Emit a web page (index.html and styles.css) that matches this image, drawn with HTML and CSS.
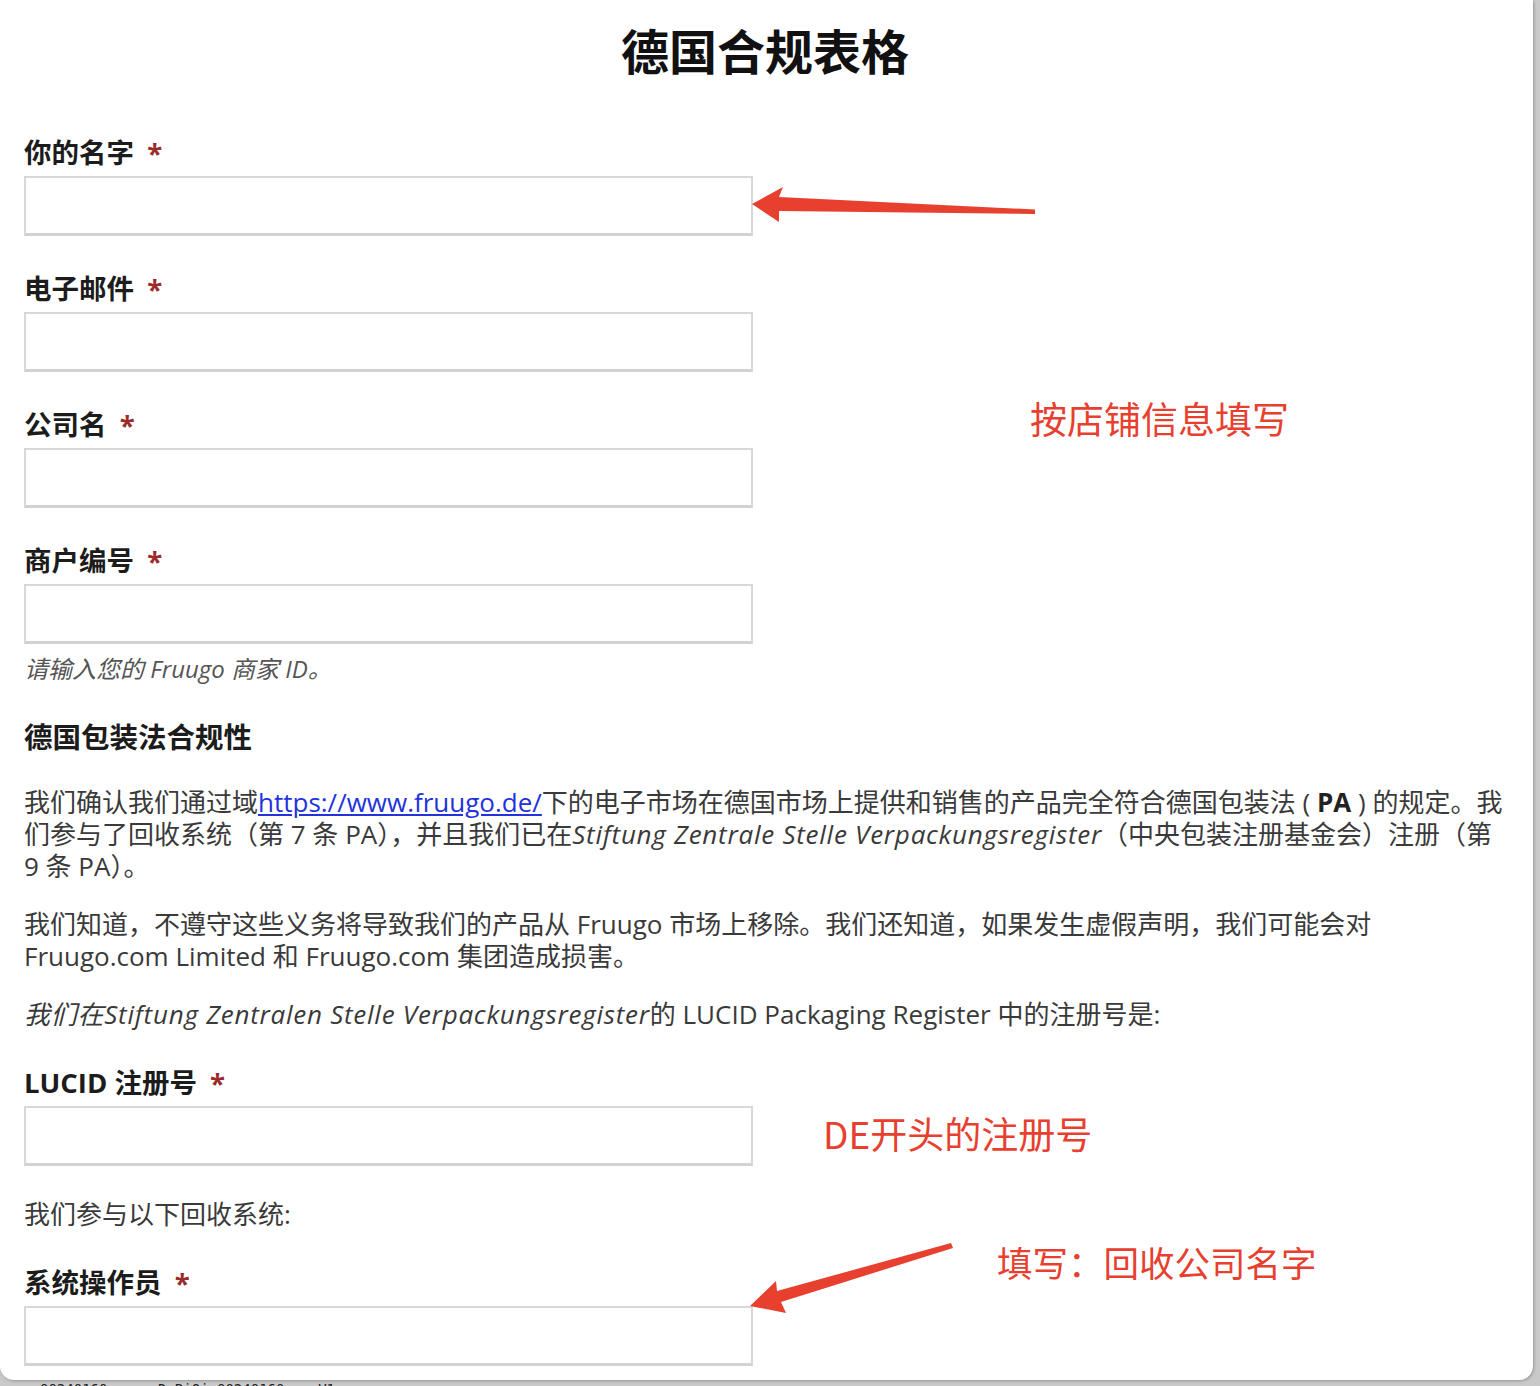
FILE: index.html
```html
<!DOCTYPE html>
<html lang="zh-CN">
<head>
    <meta charset="UTF-8">
    <meta name="viewport" content="width=device-width, initial-scale=1.0">
    <title>德国合规表格</title>
    <link rel="stylesheet" href="styles.css">
</head>
<body>
    <div class="window">
        <form class="form">
            <h1>德国合规表格</h1>

            <div class="field">
                <label>你的名字 <span class="req">*</span></label>
                <input type="text" class="text-input">
            </div>
            <div class="field">
                <label>电子邮件 <span class="req">*</span></label>
                <input type="text" class="text-input">
            </div>
            <div class="field">
                <label>公司名 <span class="req">*</span></label>
                <input type="text" class="text-input">
            </div>
            <div class="field">
                <label>商户编号 <span class="req">*</span></label>
                <input type="text" class="text-input">
                <p class="help">请输入您的 Fruugo 商家 ID。</p>
            </div>

            <h2>德国包装法合规性</h2>
            <p class="para">我们确认我们通过域<a href="#">https://www.fruugo.de/</a>下的电子市场在德国市场上提供和销售的产品完全符合德国包装法 ( <b>PA</b> ) 的规定。我们参与了回收系统（第 7 条 PA），并且我们已在<i>Stiftung Zentrale Stelle Verpackungsregister</i>（中央包装注册基金会）注册（第 9 条 PA）。</p>
            <p class="para">我们知道，不遵守这些义务将导致我们的产品从 Fruugo 市场上移除。我们还知道，如果发生虚假声明，我们可能会对 Fruugo.com Limited 和 Fruugo.com 集团造成损害。</p>
            <p class="para last"><i>我们在Stiftung Zentralen Stelle Verpackungsregister</i>的 LUCID Packaging Register 中的注册号是:</p>

            <div class="field short">
                <label>LUCID 注册号 <span class="req">*</span></label>
                <input type="text" class="text-input">
            </div>
            <p class="para last">我们参与以下回收系统:</p>
            <div class="field tight">
                <label>系统操作员 <span class="req">*</span></label>
                <input type="text" class="text-input">
            </div>
        </form>

        <!-- 标注 -->
        <div class="mark mark-shop">按店铺信息填写</div>
        <div class="mark mark-lucid">DE开头的注册号</div>
        <div class="mark mark-recycle">填写：回收公司名字</div>
        <svg class="arrows" width="1533" height="1380" viewBox="0 0 1533 1380">
            <polygon points="752,204 783,187 779,197 1035,209.5 1035,214 779,211 779,222" fill="#e8402f"/>
            <polygon points="750,1306 776,1281 777,1291 951,1243 953,1248 781,1302 786,1313" fill="#e8402f"/>
        </svg>
    </div>
    <div class="peek">00240160 &nbsp;&nbsp;&nbsp;&nbsp; D-BiOi 00240160 &nbsp;&nbsp; V1</div>
</body>
</html>
```

FILE: styles.css
```css
body {
    margin: 0;
    background-color: #c9c9c9;
    font-family: "Open Sans", "Noto Sans CJK SC", sans-serif;
    overflow: hidden;
}
.window {
    position: relative;
    width: 1533px;
    height: 1380px;
    background-color: #fff;
    border-radius: 0 0 14px 14px;
    box-shadow: 1px 1px 3px rgba(0,0,0,0.25);
    overflow: hidden;
}
.form {
    padding: 24px 27px 0 24px;
    color: #333;
}
h1 {
    margin: 0 0 57px;
    text-align: center;
    font-size: 48px;
    line-height: 56px;
    font-weight: bold;
    color: #111;
}
.field {
    margin-bottom: 37px;
}
.field.short {
    margin-bottom: 32px;
}
.field.tight {
    margin-bottom: 0;
}
.field label {
    display: block;
    font-size: 27.5px;
    line-height: 32px;
    font-weight: bold;
    color: #1c1c1c;
    margin-bottom: 7px;
}
.req {
    color: #9b2b2b;
    margin-left: 6px;
}
.text-input {
    display: block;
    box-sizing: border-box;
    width: 729px;
    height: 60px;
    margin: 0;
    border: 2px solid #d8d8d8;
    border-bottom-width: 3px;
    border-bottom-color: #d2d2d2;
    background: #fff;
}
.help {
    margin: 10px 0 0;
    font-size: 24px;
    line-height: 30px;
    font-style: italic;
    color: #555;
}
h2 {
    margin: 0 0 33px;
    font-size: 28.5px;
    line-height: 32px;
    font-weight: bold;
    color: #1c1c1c;
}
.para {
    margin: 0 0 26px;
    font-size: 26px;
    line-height: 32px;
    color: #3a3a3a;
}
.para i {
    letter-spacing: 0.75px;
}
.para.last {
    margin-bottom: 37px;
}
.para a {
    color: #2233dd;
}
.para b {
    color: #222;
}
.mark {
    position: absolute;
    font-family: "Noto Sans CJK SC", sans-serif;
    font-size: 37px;
    line-height: 40px;
    color: #e8402f;
    white-space: nowrap;
}
.mark-shop {
    left: 1030px;
    top: 398px;
}
.mark-lucid {
    left: 823px;
    top: 1113px;
}
.mark-recycle {
    left: 997px;
    top: 1242px;
    font-size: 35.5px;
}
.arrows {
    position: absolute;
    left: 0;
    top: 0;
    pointer-events: none;
}
.peek {
    height: 6px;
    overflow: hidden;
    padding-left: 40px;
    font-family: "DejaVu Sans Mono", monospace;
    font-size: 14px;
    line-height: 18px;
    color: #222;
}
```
